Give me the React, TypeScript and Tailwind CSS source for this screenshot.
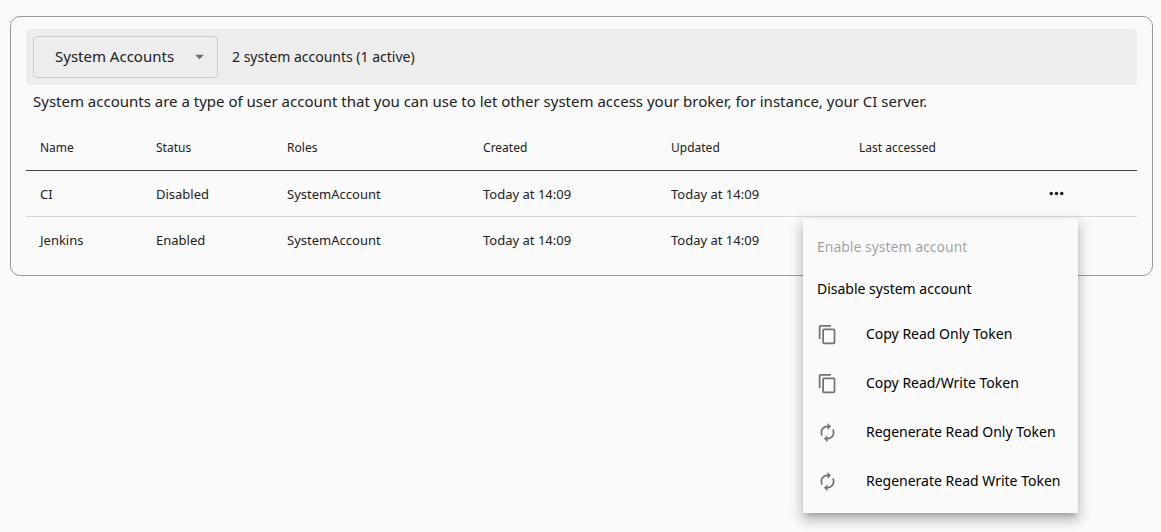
import { MdArrowDropDown, MdAutorenew, MdContentCopy, MdMoreHoriz } from "react-icons/md";

type Account = {
  name: string;
  status: string;
  roles: string;
  created: string;
  updated: string;
  lastAccessed: string;
};

const accounts: Account[] = [
  { name: "CI", status: "Disabled", roles: "SystemAccount", created: "Today at 14:09", updated: "Today at 14:09", lastAccessed: "" },
  { name: "Jenkins", status: "Enabled", roles: "SystemAccount", created: "Today at 14:09", updated: "Today at 14:09", lastAccessed: "" },
];

const tokenActions = [
  { label: "Copy Read Only Token", Icon: MdContentCopy },
  { label: "Copy Read/Write Token", Icon: MdContentCopy },
  { label: "Regenerate Read Only Token", Icon: MdAutorenew },
  { label: "Regenerate Read Write Token", Icon: MdAutorenew },
];

function AccountMenu() {
  return (
    <div
      role="menu"
      aria-label="Account actions"
      className="absolute top-full -right-[11px] z-10 mt-[15px] w-[275px] bg-[#fafafa] py-[7px] text-sm text-black shadow-[0_5px_5px_-3px_rgba(0,0,0,0.2),0_8px_10px_1px_rgba(0,0,0,0.14),0_3px_14px_2px_rgba(0,0,0,0.12)]"
    >
      <button type="button" role="menuitem" disabled className="flex h-[42px] w-full items-center px-3.5 text-black/38">
        Enable system account
      </button>
      <button type="button" role="menuitem" className="flex h-[42px] w-full items-center px-3.5">
        Disable system account
      </button>
      {tokenActions.map(({ label, Icon }) => (
        <button key={label} type="button" role="menuitem" className="flex h-[49px] w-full items-center gap-7 px-3.5 whitespace-nowrap">
          <Icon size={21} className="shrink-0 text-black/54" aria-hidden="true" />
          {label}
        </button>
      ))}
    </div>
  );
}

function AccountRow({ account, menuOpen }: { account: Account; menuOpen: boolean }) {
  return (
    <tr className="h-[46px] border-b border-[#d9d9d9] last:border-b-0">
      <td className="px-3.5 pt-0.5">{account.name}</td>
      <td className="px-3.5 pt-0.5">{account.status}</td>
      <td className="px-3.5 pt-0.5">{account.roles}</td>
      <td className="px-3.5 pt-0.5">{account.created}</td>
      <td className="px-3.5 pt-0.5">{account.updated}</td>
      <td className="px-3.5 pt-0.5">{account.lastAccessed}</td>
      <td className="px-3.5">
        <div className="relative w-fit">
          <button type="button" aria-label={`Actions for ${account.name}`} aria-haspopup="menu" className="block">
            <MdMoreHoriz size={21} />
          </button>
          {menuOpen && <AccountMenu />}
        </div>
      </td>
    </tr>
  );
}

export default function App() {
  return (
    <div className="min-h-screen bg-[#fafafa] pt-4 pr-2 pb-4 pl-2.5 font-['Noto_Sans',sans-serif] text-[#212121]">
      <main className="rounded-[10px] border border-[#999] px-[15px] pt-3 pb-[13px]">
        <div className="flex h-14 items-center gap-3.5 rounded bg-[#ededed] px-[7px] text-sm">
          <div className="relative">
            <select aria-label="Account type" className="h-[42px] w-[185px] appearance-none rounded border border-[#ccc] bg-transparent pl-[21px] text-[15px]">
              <option>System Accounts</option>
            </select>
            <MdArrowDropDown size={21} className="pointer-events-none absolute top-2.5 right-2 text-black/54" aria-hidden="true" />
          </div>
          <span>2 system accounts (1 active)</span>
        </div>
        <p className="px-[7px] pt-1.5 pb-3 text-[15px] leading-5">
          System accounts are a type of user account that you can use to let other system access your broker, for instance, your CI server.
        </p>
        <table className="w-full table-fixed border-collapse text-left text-[13px] leading-4">
          <colgroup>
            <col className="w-[10.44%]" />
            <col className="w-[11.8%]" />
            <col className="w-[17.64%]" />
            <col className="w-[16.92%]" />
            <col className="w-[16.92%]" />
            <col className="w-[16.83%]" />
            <col />
          </colgroup>
          <thead>
            <tr className="h-[47px] border-b border-[#424242] text-xs">
              <th className="px-3.5 pt-1 font-normal">Name</th>
              <th className="px-3.5 pt-1 font-normal">Status</th>
              <th className="px-3.5 pt-1 font-normal">Roles</th>
              <th className="px-3.5 pt-1 font-normal">Created</th>
              <th className="px-3.5 pt-1 font-normal">Updated</th>
              <th className="px-3.5 pt-1 font-normal">Last accessed</th>
              <th aria-label="Actions" />
            </tr>
          </thead>
          <tbody>
            {accounts.map((account, index) => (
              <AccountRow key={account.name} account={account} menuOpen={index === 0} />
            ))}
          </tbody>
        </table>
      </main>
    </div>
  );
}
